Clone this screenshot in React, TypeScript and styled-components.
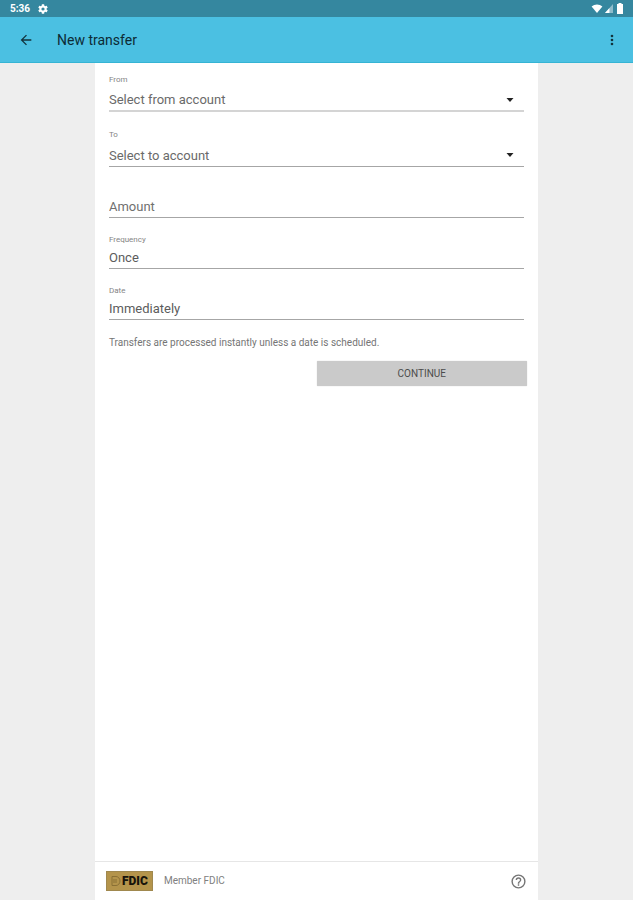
import React from "react";
import styled, { createGlobalStyle } from "styled-components";

const GlobalStyle = createGlobalStyle`
  *, *::before, *::after { box-sizing: border-box; }
  body { margin: 0; background: #eeeeee; font-family: Roboto, sans-serif; }
`;

const Page = styled.div`
  display: flex;
  flex-direction: column;
  min-height: 100vh;
`;

const StatusBar = styled.div`
  display: flex;
  align-items: center;
  justify-content: space-between;
  height: 17px;
  padding: 0 8px 0 10px;
  background: #35879f;
  color: #ffffff;
`;

const StatusGroup = styled.div<{ $gap: number }>`
  display: flex;
  align-items: center;
  gap: ${(p) => p.$gap}px;
`;

const Clock = styled.span`
  font-size: 10px;
  line-height: 12px;
  font-weight: 700;
`;

const AppBar = styled.header`
  display: flex;
  align-items: center;
  height: 46px;
  padding: 0 13px 0 18px;
  background: #4bc0e2;
  border-bottom: 1px solid #35b4d4;
  color: #12333d;
`;

const IconButton = styled.button`
  display: flex;
  padding: 0;
  border: 0;
  background: none;
  color: inherit;
  cursor: pointer;
`;

const Title = styled.h1`
  flex: 1;
  margin: 0 0 0 23px;
  font-size: 14px;
  line-height: 20px;
  font-weight: 400;
  color: #0d2b35;
`;

const Sheet = styled.main`
  display: flex;
  flex: 1;
  flex-direction: column;
  width: 70%;
  margin: 0 auto;
  background: #ffffff;
`;

const Form = styled.form`
  display: flex;
  flex: 1;
  flex-direction: column;
  padding: 9px 11px;
`;

const Fields = styled.div`
  display: flex;
  flex-direction: column;
  gap: 15px;
  padding: 0 3px;
`;

const Field = styled.div<{ $roomy?: boolean }>`
  display: flex;
  flex-direction: column;
  justify-content: flex-end;
  gap: ${(p) => (p.$roomy ? 2 : 0)}px;
  min-height: ${(p) => (p.$roomy ? 40 : 36)}px;
`;

const Label = styled.label<{ $roomy?: boolean }>`
  font-size: 8px;
  line-height: ${(p) => (p.$roomy ? 14 : 12)}px;
  color: #858585;
`;

const Control = styled.div<{ $thick?: boolean }>`
  display: flex;
  align-items: flex-end;
  height: 23px;
  border-bottom: ${(p) => (p.$thick ? "2px solid #d4d4d4" : "1px solid #a6a6a6")};
`;

const Select = styled.select`
  flex: 1;
  min-width: 0;
  height: 20px;
  padding: 0;
  border: 0;
  appearance: none;
  background: none;
  font: 400 13px/20px Roboto, sans-serif;
  color: #6a6a6a;
`;

const Caret = styled.svg`
  flex: none;
  align-self: center;
  margin-right: 10px;
  pointer-events: none;
`;

const Input = styled.input`
  flex: 1;
  min-width: 0;
  height: 20px;
  padding: 0;
  border: 0;
  background: none;
  font: 400 13px/20px Roboto, sans-serif;
  color: #5c5c5c;
  &::placeholder { color: #707070; opacity: 1; }
`;

const Note = styled.p`
  margin: 16px 3px 11px;
  font-size: 10px;
  line-height: 14px;
  color: #757575;
`;

const Submit = styled.button`
  align-self: flex-end;
  width: 50%;
  height: 25px;
  padding: 0;
  border: 0;
  border-radius: 1px;
  background: #cacaca;
  box-shadow: 0 0 1px #b8b8b8;
  font: 400 10px/14px Roboto, sans-serif;
  color: #4c4c4c;
`;

const Footer = styled.footer`
  display: flex;
  align-items: center;
  height: 39px;
  padding: 0 11px;
  border-top: 1px solid #e6e6e6;
  color: #757575;
`;

const Badge = styled.div`
  display: flex;
  align-items: center;
  justify-content: center;
  gap: 1px;
  width: 47px;
  height: 20px;
  border: 1px solid #a0884e;
  background: #b4944b;
  color: #17130a;
  font-size: 12px;
  line-height: 14px;
  font-weight: 900;
`;

const Member = styled.span`
  flex: 1;
  margin-left: 11px;
  font-size: 10px;
  line-height: 14px;
  color: #808080;
`;

type SelectFieldProps = { id: string; label: string; prompt: string; thick?: boolean };

function SelectField({ id, label, prompt, thick }: SelectFieldProps) {
  return (
    <Field $roomy>
      <Label $roomy htmlFor={id}>{label}</Label>
      <Control $thick={thick}>
        <Select id={id}>
          <option>{prompt}</option>
        </Select>
        <Caret width="8" height="4" viewBox="0 0 8 4">
          <path d="M.5 0h7L4 4z" fill="#222" />
        </Caret>
      </Control>
    </Field>
  );
}

type TextFieldProps = { id: string; label?: string; value?: string; placeholder?: string };

function TextField({ id, label, value, placeholder }: TextFieldProps) {
  return (
    <Field>
      {label && <Label htmlFor={id}>{label}</Label>}
      <Control>
        <Input id={id} defaultValue={value} placeholder={placeholder} aria-label={label ? undefined : placeholder} />
      </Control>
    </Field>
  );
}

export default function App() {
  return (
    <>
      <GlobalStyle />
      <Page>
        <StatusBar>
          <StatusGroup $gap={7}>
            <Clock>5:36</Clock>
            <svg width="12" height="12" viewBox="0 0 24 24" fill="currentColor">
              <path d="M19.14 12.94c.04-.3.06-.61.06-.94s-.02-.64-.07-.94l2.03-1.58a.49.49 0 0 0 .12-.61l-1.92-3.32a.49.49 0 0 0-.59-.22l-2.39.96a7 7 0 0 0-1.62-.94l-.36-2.54a.48.48 0 0 0-.48-.41h-3.84a.47.47 0 0 0-.47.41l-.36 2.54c-.59.24-1.13.57-1.62.94l-2.39-.96a.48.48 0 0 0-.59.22L2.74 8.87a.47.47 0 0 0 .12.61l2.03 1.58c-.05.3-.09.63-.09.94s.02.64.07.94l-2.03 1.58a.49.49 0 0 0-.12.61l1.92 3.32c.12.22.37.29.59.22l2.39-.96c.5.38 1.03.7 1.62.94l.36 2.54c.05.24.24.41.48.41h3.84c.24 0 .44-.17.47-.41l.36-2.54a7 7 0 0 0 1.62-.94l2.39.96c.22.08.47 0 .59-.22l1.92-3.32a.47.47 0 0 0-.12-.61zM12 15.2a3.2 3.2 0 1 1 0-6.4 3.2 3.2 0 0 1 0 6.4z" />
            </svg>
          </StatusGroup>
          <StatusGroup $gap={2}>
            <svg width="12" height="9" viewBox="0 0 12 10" fill="currentColor">
              <path d="M0 2.800C3.300-.3 8.700-.3 12 2.800L6 10z" />
            </svg>
            <svg width="8" height="9" viewBox="0 0 9 10">
              <path d="M9 0v10H0z" fill="#8fbccb" />
              <path d="M5 4.500V10H0z" fill="#fff" />
            </svg>
            <svg width="10" height="11" viewBox="0 0 10 11" fill="currentColor">
              <path d="M3.500 0h3v1H8v10H2V1h1.500z" />
            </svg>
          </StatusGroup>
        </StatusBar>
        <AppBar>
          <IconButton type="button" aria-label="Back">
            <svg width="16" height="16" viewBox="0 0 24 24" fill="currentColor">
              <path d="M20 11H7.830l5.590-5.590L12 4l-8 8 8 8 1.410-1.410L7.830 13H20z" />
            </svg>
          </IconButton>
          <Title>New transfer</Title>
          <IconButton type="button" aria-label="More options">
            <svg width="16" height="16" viewBox="0 0 24 24" fill="currentColor">
              <circle cx="12" cy="6" r="2" />
              <circle cx="12" cy="12" r="2" />
              <circle cx="12" cy="18" r="2" />
            </svg>
          </IconButton>
        </AppBar>
        <Sheet>
          <Form onSubmit={(e) => e.preventDefault()}>
            <Fields>
              <SelectField id="from" label="From" prompt="Select from account" thick />
              <SelectField id="to" label="To" prompt="Select to account" />
              <TextField id="amount" placeholder="Amount" />
              <TextField id="frequency" label="Frequency" value="Once" />
              <TextField id="date" label="Date" value="Immediately" />
            </Fields>
            <Note>Transfers are processed instantly unless a date is scheduled.</Note>
            <Submit type="submit">CONTINUE</Submit>
          </Form>
          <Footer>
            <Badge>
              <svg width="10" height="12" viewBox="0 0 10 12" fill="none" stroke="#8a7035" strokeWidth="1">
                <path d="M1 1.500h4a4 4.500 0 0 1 0 9H1zM3 4v4M5 4v4" />
              </svg>
              FDIC
            </Badge>
            <Member>Member FDIC</Member>
            <IconButton type="button" aria-label="Help">
              <svg width="17" height="17" viewBox="0 0 24 24" fill="currentColor">
                <path d="M11 18h2v-2h-2zm1-16a10 10 0 1 0 0 20 10 10 0 0 0 0-20zm0 18a8 8 0 1 1 0-16 8 8 0 0 1 0 16zm0-14a4 4 0 0 0-4 4h2a2 2 0 1 1 4 0c0 2-3 1.750-3 5h2c0-2.250 3-2.500 3-5a4 4 0 0 0-4-4z" />
              </svg>
            </IconButton>
          </Footer>
        </Sheet>
      </Page>
    </>
  );
}
